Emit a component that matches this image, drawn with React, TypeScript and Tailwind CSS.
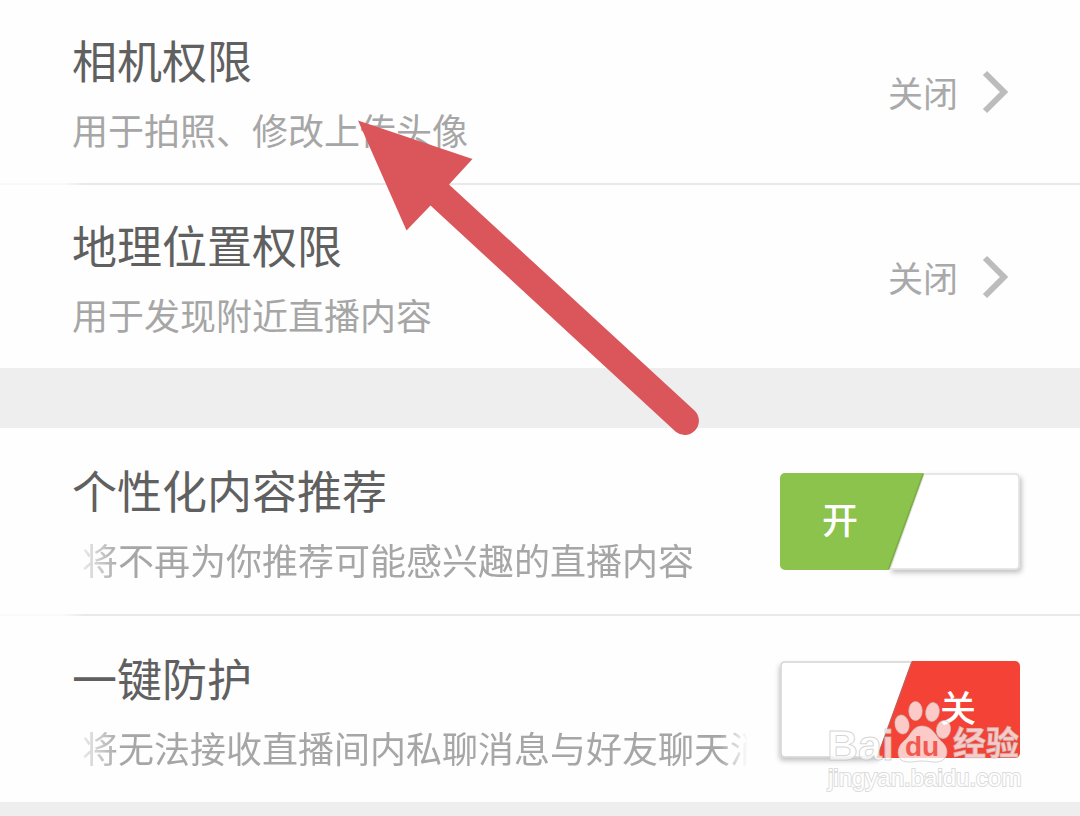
import { useState, type ReactNode } from "react";

function Divider() {
  return <div className="h-[2px] bg-linear-to-r from-[#f9f9f9] from-[64px] to-[#e9e9e9] to-[84px]" />;
}

function PermissionRow({ title, detail }: { title: string; detail: string }) {
  return (
    <button type="button" className="flex w-full items-center gap-[22px] py-[30px] pr-[60px] pl-[72px] text-left">
      <span className="flex min-w-0 grow flex-col gap-[15px]">
        <span className="text-[45px] leading-[60px] text-[#606060]">{title}</span>
        <span className="text-[36px] leading-[48px] text-[#a6a6a6]">{detail}</span>
      </span>
      <span className="text-[35px] leading-[48px] whitespace-nowrap text-[#a9a9a9]">关闭</span>
      <svg className="h-[44px] w-[40px] shrink-0" viewBox="0 0 40 44" fill="none" aria-hidden="true">
        <path d="M5 3 L24 22 L5 41" stroke="#bcbcbc" strokeWidth="6" />
      </svg>
    </button>
  );
}

function SlantSwitch({ id, on, onChange }: { id: string; on: boolean; onChange: (v: boolean) => void }) {
  return (
    <label htmlFor={id} className="relative block h-[97px] w-[240px] shrink-0 cursor-pointer">
      <input
        id={id}
        type="checkbox"
        role="switch"
        className="sr-only"
        checked={on}
        onChange={(e) => onChange(e.target.checked)}
      />
      <svg className="absolute inset-0 h-full w-full overflow-visible" viewBox="0 0 240 97" aria-hidden="true">
        <defs>
          <filter id={`${id}-shadow`} x="-10%" y="-15%" width="120%" height="140%">
            <feDropShadow dx={on ? 2 : -1} dy="3" stdDeviation="2.5" floodColor="#000" floodOpacity="0.24" />
          </filter>
          <clipPath id={`${id}-clip`}>
            <rect width="240" height="97" rx="5" />
          </clipPath>
        </defs>
        {on ? (
          <>
            <path
              d="M144 1 H235 Q239 1 239 5 V92 Q239 96 235 96 H110 Z"
              fill="#fff"
              stroke="#e0e0e0"
              strokeWidth="1.5"
              filter={`url(#${id}-shadow)`}
            />
            <path d="M0 0 H144 L109 97 H0 Z" fill="#8bc34c" clipPath={`url(#${id}-clip)`} />
            <path d="M143 1 L108.5 96" stroke="#7cae43" strokeWidth="1.5" />
          </>
        ) : (
          <>
            <path
              d="M132 1 H5 Q1 1 1 5 V92 Q1 96 5 96 H98 Z"
              fill="#fff"
              stroke="#d4d4d4"
              strokeWidth="1.5"
              filter={`url(#${id}-shadow)`}
            />
            <path d="M132 0 H240 V97 H97 Z" fill="#f44336" clipPath={`url(#${id}-clip)`} />
            <path d="M132 1 L97.5 96" stroke="#c95a52" strokeWidth="1.5" />
          </>
        )}
      </svg>
      <span
        className={
          "relative flex h-full items-center pb-[8px] text-[36px] leading-none font-medium text-white " +
          (on ? "justify-start pl-[42px]" : "justify-end pr-[44px]")
        }
      >
        {on ? "开" : "关"}
      </span>
    </label>
  );
}

function SwitchRow({ id, title, detail, initial }: { id: string; title: string; detail: string; initial: boolean }) {
  const [on, setOn] = useState(initial);
  return (
    <div className="flex items-center gap-8 pt-[32px] pr-[60px] pb-[31px] pl-[72px]">
      <div className="flex min-w-0 grow flex-col gap-[15px]">
        <label htmlFor={id} className="text-[45px] leading-[60px] text-[#606060]">
          {title}
        </label>
        <p className="overflow-hidden mask-l-from-[calc(100%-48px)] mask-r-from-[calc(100%-28px)] pl-[10px] text-[36px] leading-[48px] whitespace-nowrap text-[#a6a6a6]">
          {detail}
        </p>
      </div>
      <SlantSwitch id={id} on={on} onChange={setOn} />
    </div>
  );
}

function Group({ children }: { children: ReactNode }) {
  return <section className="bg-[#fefefe]">{children}</section>;
}

function PointerArrow() {
  return (
    <svg
      className="pointer-events-none absolute top-[120px] left-[358px] h-[316px] w-[342px]"
      viewBox="358 120 342 316"
      aria-hidden="true"
    >
      <path
        d="M358 120.5 L472.5 159 L449 184.5 L695 411 A14.2 14.2 0 0 1 676 432 L430.5 205.5 L406.5 230.5 Z"
        fill="#da565b"
      />
    </svg>
  );
}

function Watermark() {
  return (
    <svg
      className="pointer-events-none absolute top-[696px] right-[56px] h-[100px] w-[200px]"
      viewBox="824 696 200 100"
      role="img"
      aria-label="Baidu 经验"
    >
      <g fill="#fff" fillOpacity="0.72" stroke="#c4c4c4" strokeOpacity="0.7" strokeWidth="1">
        <text x="827" y="760" fontSize="43" fontWeight="700" fontFamily="Liberation Sans, Arial, sans-serif">
          Bai
        </text>
        <ellipse cx="902" cy="724.5" rx="7" ry="9.5" transform="rotate(-12 902 724.5)" />
        <ellipse cx="915.5" cy="711" rx="6.7" ry="9.5" />
        <ellipse cx="932.5" cy="712" rx="6.7" ry="9.5" transform="rotate(10 932.5 712)" />
        <ellipse cx="943.5" cy="729.5" rx="7" ry="9" transform="rotate(10 943.5 729.5)" />
        <path d="M922 726 C932 726 935 735 941 741 C948 747 949 755 943 760 C937 764 930 761 922 761 C915 761 907 764 901 760 C896 754 898 746 904 741 C911 736 912 726 922 726 Z" />
        <text x="953" y="755" fontSize="33" fontWeight="700" fontFamily="Noto Sans CJK SC, sans-serif">
          经验
        </text>
      </g>
      <text
        x="905"
        y="756"
        fontSize="28"
        fontWeight="700"
        fontFamily="Liberation Sans, Arial, sans-serif"
        fill="#f15a50"
      >
        du
      </text>
      <text
        x="828"
        y="786"
        fontSize="24"
        fontFamily="Liberation Sans, Arial, sans-serif"
        fill="#fff"
        stroke="#dcdcdc"
        strokeWidth="2"
        paintOrder="stroke"
      >
        jingyan.baidu.com
      </text>
    </svg>
  );
}

export default function App() {
  return (
    <main className="relative min-h-screen overflow-hidden bg-[#eeeeee] font-['Noto_Sans_CJK_SC',sans-serif]">
      <Group>
        <PermissionRow title="相机权限" detail="用于拍照、修改上传头像" />
        <Divider />
        <PermissionRow title="地理位置权限" detail="用于发现附近直播内容" />
      </Group>
      <div className="h-[60px]" />
      <Group>
        <SwitchRow
          id="personalized"
          title="个性化内容推荐"
          detail="将不再为你推荐可能感兴趣的直播内容"
          initial={true}
        />
        <Divider />
        <SwitchRow
          id="protection"
          title="一键防护"
          detail="将无法接收直播间内私聊消息与好友聊天消息"
          initial={false}
        />
      </Group>
      <PointerArrow />
      <Watermark />
    </main>
  );
}
